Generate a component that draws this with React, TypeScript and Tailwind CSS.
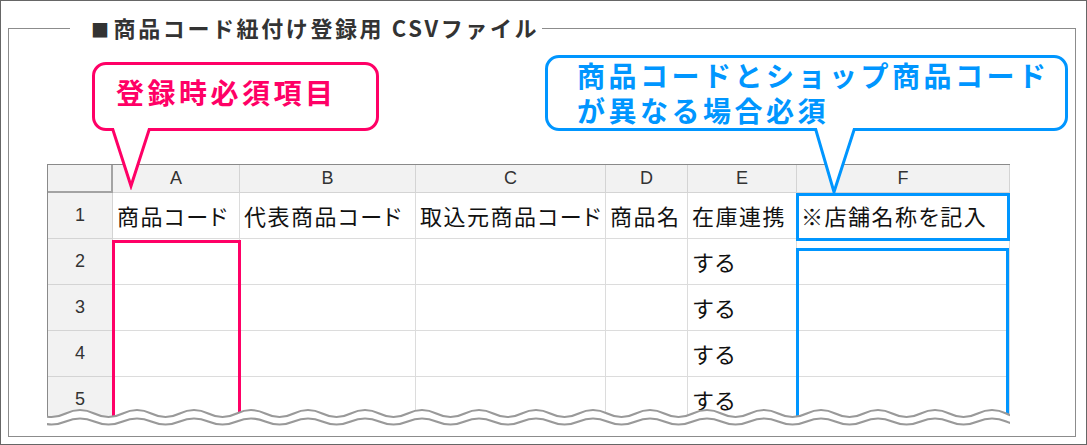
import React from "react";

const LETTERS = ["A", "B", "C", "D", "E", "F"];
const WIDTHS = ["w-[127px]", "w-[176px]", "w-[190px]", "w-[82px]", "w-[109px]", "w-[213px]"];
const HEAD = ["商品コード", "代表商品コード", "取込元商品コード", "商品名", "在庫連携", "※店舗名称を記入"];

const jp = "font-['Noto_Sans_CJK_JP',sans-serif]";
const latin = "font-['Liberation_Sans',Arial,sans-serif]";

// sine-ish line made of quadratic curves, crest every 57px
const wavePath = (c: number, a: number) => {
  const p = 57;
  let x = 33 - p / 4 - p;
  let d = `M${x} ${c} Q${x + p / 4} ${c - 2 * a} ${x + p / 2} ${c}`;
  x += p / 2;
  while (x < 1000) {
    x += p / 2;
    d += ` T${x} ${c}`;
  }
  return d;
};

const Wave = () => {
  const top = wavePath(9.5, 3.5);
  return (
    <svg className="absolute bottom-0 left-0" width="963" height="22" viewBox="0 0 963 22">
      <path d={`${top} L1000 22 L-60 22 Z`} fill="#ffffff" />
      <path d={top} fill="none" stroke="#999999" strokeWidth="2" />
      <path d={wavePath(17.5, 3)} fill="none" stroke="#999999" strokeWidth="2.2" />
    </svg>
  );
};

const Sheet = () => {
  const rows = [2, 3, 4, 5];
  return (
    <div className="relative ml-[38px] mt-[33px] h-[262px] w-[963px] overflow-hidden">
      <div className="flex w-[963px] flex-col border-l border-t border-[#8a8a8a]">
        {/* column letters */}
        <div className="flex">
          <div className="box-border h-[28px] w-[65px] border-b-2 border-r-2 border-[#a3a3a3] bg-[#f2f2f2]" />
          {LETTERS.map((l, i) => (
            <div
              key={l}
              className={`box-border flex h-[28px] items-center justify-center border-b border-r border-[#d4d4d4] bg-[#f2f2f2] text-[18px] text-[#333] ${latin} ${WIDTHS[i]}`}
            >
              {l}
            </div>
          ))}
        </div>

        {/* row 1 */}
        <div className="flex">
          <div className={`box-border flex h-[46px] w-[65px] items-center justify-center border-b border-r border-[#d4d4d4] bg-[#f2f2f2] text-[18px] text-[#333] ${latin}`}>
            1
          </div>
          {HEAD.map((t, i) => (
            <div
              key={t}
              className={`box-border flex h-[46px] items-center whitespace-nowrap border-b border-r border-[#dcdcdc] bg-white pl-[4px] text-[22px] tracking-[1.5px] text-[#111] [font-feature-settings:'palt'] ${jp} ${WIDTHS[i]}`}
            >
              {t}
            </div>
          ))}
        </div>

        {rows.map((r) => (
          <div key={r} className="flex">
            <div className={`box-border flex h-[46px] w-[65px] items-center justify-center border-b border-r border-[#d4d4d4] bg-[#f2f2f2] text-[18px] text-[#333] ${latin}`}>
              {r}
            </div>
            {LETTERS.map((l, i) => (
              <div
                key={l}
                className={`box-border flex h-[46px] items-center border-b border-r border-[#dcdcdc] bg-white pl-[4px] text-[22px] text-[#111] ${jp} ${WIDTHS[i]}`}
              >
                {l === "E" ? "する" : ""}
              </div>
            ))}
          </div>
        ))}
      </div>

      {/* highlights */}
      <div className="absolute bottom-0 left-[65px] top-[76px] w-[129px] border-x-[3px] border-t-[3px] border-[#ff0066]" />
      <div className="absolute left-[749px] top-[29px] h-[48px] w-[214px] border-[3px] border-[#0096ff]" />
      <div className="absolute bottom-0 left-[749px] top-[84px] w-[213px] border-x-[3px] border-t-[3px] border-[#0096ff]" />

      <Wave />
    </div>
  );
};

export default function App() {
  return (
    <div className="box-border h-[445px] w-[1087px] border border-[#666] bg-white pl-[7px] pt-[10px]">
      <fieldset className="box-border w-[1068px] border border-[#8c8c8c] pb-[10px]">
        <legend className={`ml-[61px] pl-[21px] pr-[3px] text-[22px] font-bold leading-[32px] tracking-[2.6px] text-[#333] ${jp}`}>
          <span className="mr-[2px] text-[18px]">■</span>
          商品コード紐付け登録用 CSVファイル
        </legend>

        {/* callouts */}
        <div className="mt-[10px] flex items-end">
          <div className="relative ml-[83px] box-border flex h-[69px] w-[287px] items-center rounded-[14px] border-[3px] border-[#ff0066] bg-white pb-[8px] pl-[21px]">
            <span className={`text-[28px] font-bold leading-[35px] tracking-[3.5px] text-[#ff0066] ${jp}`}>
              登録時必須項目
            </span>
            <svg className="absolute left-[15px] top-full z-10" width="44" height="62" viewBox="0 0 44 62">
              <polygon points="2,0 21,59 40,0" fill="#ffffff" />
              <polyline points="2,-1 21,58 40,-1" fill="none" stroke="#ff0066" strokeWidth="3" />
            </svg>
          </div>

          <div className="relative ml-[166px] box-border flex h-[76px] w-[523px] items-center rounded-[14px] border-[3px] border-[#0096ff] bg-white pl-[29px]">
            <p className={`text-[28px] font-bold leading-[35px] tracking-[3.5px] text-[#0096ff] ${jp}`}>
              商品コードとショップ商品コード
              <br />
              が異なる場合必須
            </p>
            <svg className="absolute left-[265px] top-full z-10" width="46" height="68" viewBox="0 0 46 68">
              <polygon points="2,0 21,65 42,0" fill="#ffffff" />
              <polyline points="2,-1 21,64 42,-1" fill="none" stroke="#0096ff" strokeWidth="3" />
            </svg>
          </div>
        </div>

        <Sheet />
      </fieldset>
    </div>
  );
}
